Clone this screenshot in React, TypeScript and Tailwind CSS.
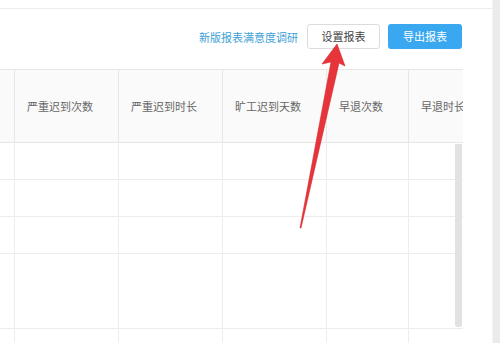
import React from "react";

const cols = ["", "严重迟到次数", "严重迟到时长", "旷工迟到天数", "早退次数", "早退时长"];
const widths = ["w-[15px]", "w-[104px]", "w-[104px]", "w-[104px]", "w-[82px]", "w-[104px]"];
const rowHeights = ["h-[37px]", "h-[37px]", "h-[37px]", "h-[75px]", "h-[40px]"];

function Arrow() {
  return (
    <svg className="absolute left-0 top-0 pointer-events-none" width="500" height="343">
      <polygon
        points="337,44 345,66 339,63 301,228 300,228 331,62 322,64"
        fill="#e5353a"
        stroke="#d8262d"
        strokeWidth="0.6"
        strokeLinejoin="round"
      />
    </svg>
  );
}

export default function App() {
  return (
    <div
      className="relative flex w-[500px] h-[343px] overflow-hidden bg-white"
      style={{ fontFamily: '"Noto Sans CJK SC", "Noto Sans", sans-serif' }}
    >
      <div className="flex flex-col w-[492px]">
        <div className="h-[9px] border-b border-[#ececec] shrink-0" />
        {/* toolbar */}
        <div className="flex h-[60px] shrink-0 items-start justify-end pt-[15px] pr-[30px] gap-2">
          <a className="mt-[5px] mr-[1px] text-[11px] leading-[16px] text-[#3d9fd8]">新版报表满意度调研</a>
          <button className="h-[25px] w-[73px] rounded-[3px] border border-[#dcdcdc] bg-white text-[11px] text-[#444]">
            设置报表
          </button>
          <button className="h-[25px] w-[74px] rounded-[3px] bg-[#3aa8f0] text-[11px] text-white">
            导出报表
          </button>
        </div>
        {/* table */}
        <div className="relative w-[463px] flex-1 overflow-hidden border-t border-[#e6e6e6]">
          <div className="flex h-[73px] bg-[#fafafa] border-b border-[#e6e6e6]">
            {cols.map((c, i) => (
              <div
                key={i}
                className={`${widths[i]} shrink-0 flex items-center pl-3 whitespace-nowrap text-[11px] text-[#666] ${i < cols.length - 1 ? "border-r border-[#e6e6e6]" : ""}`}
              >
                {c}
              </div>
            ))}
          </div>
          {rowHeights.map((h, r) => (
            <div key={r} className={`flex ${h} ${r < 4 ? "border-b border-[#ececec]" : ""}`}>
              {cols.map((_, i) => (
                <div
                  key={i}
                  className={`${widths[i]} shrink-0 ${i < cols.length - 1 ? "border-r border-[#ececec]" : ""}`}
                />
              ))}
            </div>
          ))}
          {/* scrollbar */}
          <div className="absolute right-[1px] top-[74px] h-[183px] w-[7px] rounded-b-[2px] bg-[#e2e2e2]" />
        </div>
      </div>
      <div className="w-[8px] h-full bg-[#ebebeb] border-l border-[#f4f4f4]" />
      <Arrow />
    </div>
  );
}
